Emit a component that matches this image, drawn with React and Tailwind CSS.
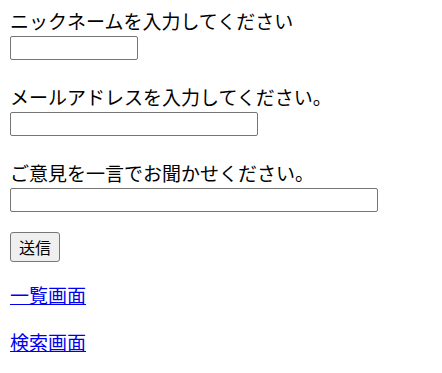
const Field = ({ label, width }) => {
  return (
    <div className="flex flex-col mb-[24px]">
      <label className="h-[28px] leading-[25px] text-[19px] text-black">{label}</label>
      <input
        type="text"
        className={`${width} h-[24px] border border-[#767676] rounded-[2px] bg-white px-[2px] outline-none`}
      />
    </div>
  );
};

const App = () => {
  return (
    <div className="pt-[8px] px-[10px] bg-white min-h-screen font-['Noto_Sans_CJK_JP','Noto_Sans',sans-serif]">
      <form className="flex flex-col items-start">
        <Field label="ニックネームを入力してください" width="w-[128px]" />
        <Field label="メールアドレスを入力してください。" width="w-[248px]" />
        <div className="flex flex-col">
          <label className="h-[28px] leading-[25px] text-[19px] text-black">ご意見を一言でお聞かせください。</label>
          <input
            type="text"
            className="w-[368px] h-[24px] border border-[#767676] rounded-[2px] bg-white px-[2px] outline-none"
          />
        </div>
        <button
          type="button"
          className="mt-[20px] w-[50px] h-[30px] border border-[#767676] rounded-[3px] bg-[#efefef] text-[16px] leading-none text-black"
        >
          送信
        </button>
      </form>
      <div className="flex flex-col items-start mt-[20px] text-[19px]">
        <a href="#" className="h-[28px] leading-[26px] text-[#0000ee] underline">一覧画面</a>
        <a href="#" className="mt-[19px] h-[28px] leading-[26px] text-[#0000ee] underline">検索画面</a>
      </div>
    </div>
  );
};

export default App;
